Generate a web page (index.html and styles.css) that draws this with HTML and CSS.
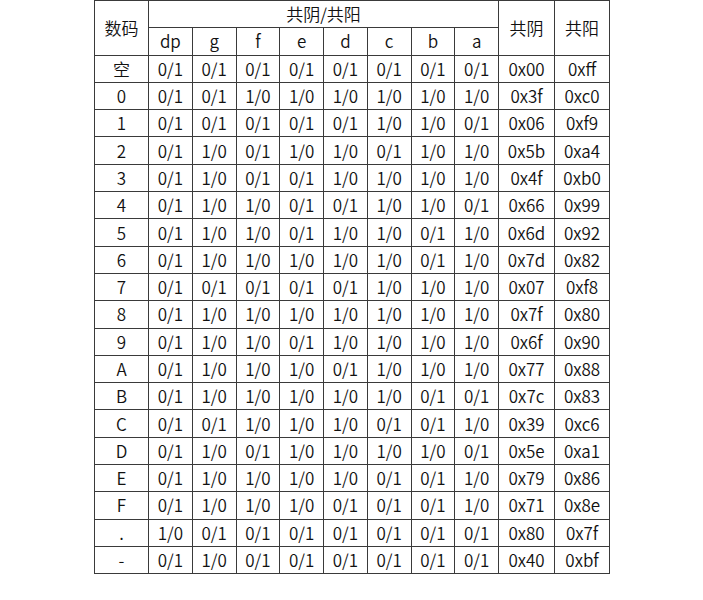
FILE: index.html
```html
<!DOCTYPE html>
<html lang="zh">
<head>
<meta charset="utf-8">
<link rel="stylesheet" href="styles.css">
</head>
<body>
<table class="seg">
  <colgroup>
    <col class="c-num">
    <col class="c-bit"><col class="c-bit"><col class="c-bit"><col class="c-bit">
    <col class="c-bit"><col class="c-bit"><col class="c-bit"><col class="c-bit">
    <col class="c-cc"><col class="c-ca">
  </colgroup>
  <thead>
    <tr><th rowspan="2">数码</th><th colspan="8">共阴/共阳</th><th rowspan="2">共阴</th><th rowspan="2">共阳</th></tr>
    <tr><th>dp</th><th>g</th><th>f</th><th>e</th><th>d</th><th>c</th><th>b</th><th>a</th></tr>
  </thead>
  <tbody>
    <tr><td>空</td><td>0/1</td><td>0/1</td><td>0/1</td><td>0/1</td><td>0/1</td><td>0/1</td><td>0/1</td><td>0/1</td><td>0x00</td><td>0xff</td></tr>
    <tr><td>0</td><td>0/1</td><td>0/1</td><td>1/0</td><td>1/0</td><td>1/0</td><td>1/0</td><td>1/0</td><td>1/0</td><td>0x3f</td><td>0xc0</td></tr>
    <tr><td>1</td><td>0/1</td><td>0/1</td><td>0/1</td><td>0/1</td><td>0/1</td><td>1/0</td><td>1/0</td><td>0/1</td><td>0x06</td><td>0xf9</td></tr>
    <tr><td>2</td><td>0/1</td><td>1/0</td><td>0/1</td><td>1/0</td><td>1/0</td><td>0/1</td><td>1/0</td><td>1/0</td><td>0x5b</td><td>0xa4</td></tr>
    <tr><td>3</td><td>0/1</td><td>1/0</td><td>0/1</td><td>0/1</td><td>1/0</td><td>1/0</td><td>1/0</td><td>1/0</td><td>0x4f</td><td>0xb0</td></tr>
    <tr><td>4</td><td>0/1</td><td>1/0</td><td>1/0</td><td>0/1</td><td>0/1</td><td>1/0</td><td>1/0</td><td>0/1</td><td>0x66</td><td>0x99</td></tr>
    <tr><td>5</td><td>0/1</td><td>1/0</td><td>1/0</td><td>0/1</td><td>1/0</td><td>1/0</td><td>0/1</td><td>1/0</td><td>0x6d</td><td>0x92</td></tr>
    <tr><td>6</td><td>0/1</td><td>1/0</td><td>1/0</td><td>1/0</td><td>1/0</td><td>1/0</td><td>0/1</td><td>1/0</td><td>0x7d</td><td>0x82</td></tr>
    <tr><td>7</td><td>0/1</td><td>0/1</td><td>0/1</td><td>0/1</td><td>0/1</td><td>1/0</td><td>1/0</td><td>1/0</td><td>0x07</td><td>0xf8</td></tr>
    <tr><td>8</td><td>0/1</td><td>1/0</td><td>1/0</td><td>1/0</td><td>1/0</td><td>1/0</td><td>1/0</td><td>1/0</td><td>0x7f</td><td>0x80</td></tr>
    <tr><td>9</td><td>0/1</td><td>1/0</td><td>1/0</td><td>0/1</td><td>1/0</td><td>1/0</td><td>1/0</td><td>1/0</td><td>0x6f</td><td>0x90</td></tr>
    <tr><td>A</td><td>0/1</td><td>1/0</td><td>1/0</td><td>1/0</td><td>0/1</td><td>1/0</td><td>1/0</td><td>1/0</td><td>0x77</td><td>0x88</td></tr>
    <tr><td>B</td><td>0/1</td><td>1/0</td><td>1/0</td><td>1/0</td><td>1/0</td><td>1/0</td><td>0/1</td><td>0/1</td><td>0x7c</td><td>0x83</td></tr>
    <tr><td>C</td><td>0/1</td><td>0/1</td><td>1/0</td><td>1/0</td><td>1/0</td><td>0/1</td><td>0/1</td><td>1/0</td><td>0x39</td><td>0xc6</td></tr>
    <tr><td>D</td><td>0/1</td><td>1/0</td><td>0/1</td><td>1/0</td><td>1/0</td><td>1/0</td><td>1/0</td><td>0/1</td><td>0x5e</td><td>0xa1</td></tr>
    <tr><td>E</td><td>0/1</td><td>1/0</td><td>1/0</td><td>1/0</td><td>1/0</td><td>0/1</td><td>0/1</td><td>1/0</td><td>0x79</td><td>0x86</td></tr>
    <tr><td>F</td><td>0/1</td><td>1/0</td><td>1/0</td><td>1/0</td><td>0/1</td><td>0/1</td><td>0/1</td><td>1/0</td><td>0x71</td><td>0x8e</td></tr>
    <tr><td>.</td><td>1/0</td><td>0/1</td><td>0/1</td><td>0/1</td><td>0/1</td><td>0/1</td><td>0/1</td><td>0/1</td><td>0x80</td><td>0x7f</td></tr>
    <tr><td>-</td><td>0/1</td><td>1/0</td><td>0/1</td><td>0/1</td><td>0/1</td><td>0/1</td><td>0/1</td><td>0/1</td><td>0x40</td><td>0xbf</td></tr>
  </tbody>
</table>
</body>
</html>
```
FILE: styles.css
```css
html, body {
  margin: 0;
  padding: 0;
  background: #ffffff;
}
body {
  padding-left: 94px;
  font-family: "Noto Sans CJK SC", "Noto Sans", sans-serif;
  color: #111111;
}
.seg {
  border-collapse: collapse;
  table-layout: fixed;
  width: 515px;
  font-size: 17px;
}
.c-num { width: 54px; }
.c-bit { width: 43.75px; }
.c-cc { width: 56px; }
.c-ca { width: 55px; }
.seg th,
.seg td {
  border: 1px solid #3a3a3a;
  padding: 0;
  height: 26.3px;
  line-height: 20px;
  text-align: center;
  vertical-align: middle;
  font-weight: 350;
}
```
